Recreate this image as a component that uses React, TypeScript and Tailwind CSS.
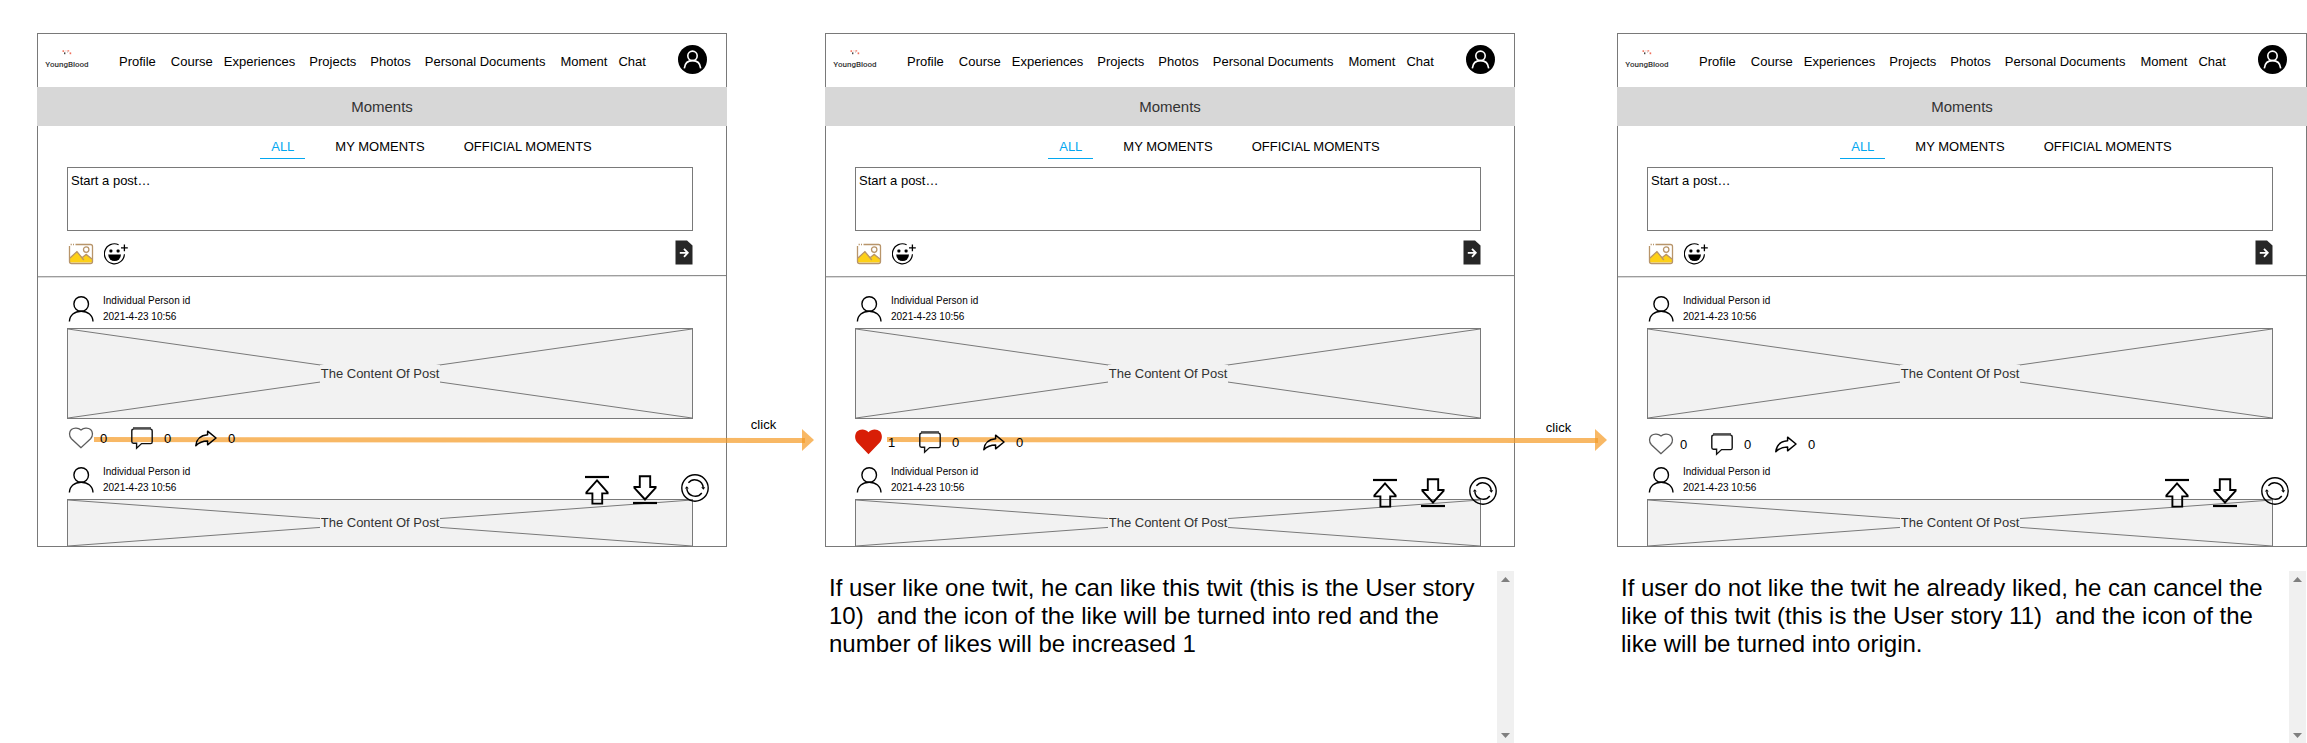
import React from "react";

const NAV = [
  { label: "Profile", space: "" },
  { label: "Course", space: "ml-[15px]" },
  { label: "Experiences", space: "ml-[11px]" },
  { label: "Projects", space: "ml-[14px]" },
  { label: "Photos", space: "ml-[14px]" },
  { label: "Personal Documents", space: "ml-[14px]" },
  { label: "Moment", space: "ml-[15px]" },
  { label: "Chat", space: "ml-[11px]" },
];

function Logo() {
  return (
    <a href="#home" className="flex w-[44px] flex-col items-center">
      <svg width="10" height="5" viewBox="0 0 10 5" aria-hidden="true">
        <rect x="0.5" y="0.3" width="1.6" height="1.6" fill="#f0705c" />
        <rect x="2" y="2.4" width="1.4" height="1.8" fill="#444" />
        <rect x="3.4" y="0.4" width="1" height="1" fill="#f6b3a6" />
        <rect x="5.4" y="0.3" width="1.8" height="1.2" fill="#f0705c" />
        <rect x="5" y="1.6" width="1" height="1" fill="#bbb" />
        <rect x="7.6" y="2.4" width="1.6" height="1.8" fill="#f0705c" />
      </svg>
      <span className="mt-1 font-['Roboto'] text-[8px] leading-[12px] font-medium text-[#333]">YoungBlood</span>
    </a>
  );
}

function AccountIcon() {
  return (
    <svg width="29" height="29" viewBox="0 0 29 29" aria-hidden="true">
      <circle cx="14.5" cy="14.5" r="14.5" />
      <g fill="none" stroke="#fff" strokeWidth="1.6">
        <circle cx="14.5" cy="10.8" r="4.7" />
        <path d="M6.3 23.3C6.8 18.4 10 15.6 14.5 15.6S22.2 18.4 22.7 23.3" />
      </g>
    </svg>
  );
}

function PersonIcon() {
  return (
    <svg width="26" height="26" viewBox="0 0 26 26" fill="none" stroke="#000" strokeWidth="1.4" aria-hidden="true">
      <circle cx="13.2" cy="8" r="7.3" />
      <path d="M1.4 25.6C1.6 19.2 6.6 15.3 13.2 15.3S24.8 19.2 25 25.6" />
    </svg>
  );
}

function PictureIcon() {
  return (
    <svg width="26" height="22" viewBox="0 0 26 22" aria-hidden="true">
      <path d="M2 19.5V14.6L9 8.2L14.3 14.6L18.3 11.3L24 16V19.5Z" fill="#fdd017" />
      <g fill="none" stroke="#b8956a" strokeWidth="1.3">
        <path d="M1.5 3V18.5Q1.5 20.5 3.5 20.5H22.5Q24.5 20.5 24.5 18.5V3.5Q24.5 1.5 22.5 1.5H7.5" />
        <path d="M2.6 1.5H3.8M5 1.5H6" />
        <path d="M2 15L8.9 8.6L15.8 17M13.9 14.8L18.2 11.4L24 16" />
        <circle cx="18.2" cy="6.6" r="2.7" />
      </g>
    </svg>
  );
}

function EmojiIcon() {
  return (
    <svg width="25" height="22" viewBox="0 0 25 22" aria-hidden="true">
      <path d="M14.6 1.7A10 10 0 1 0 20.4 11.3" fill="none" stroke="#000" strokeWidth="1.2" />
      <path d="M20.4 1.4V8.2M17 4.8H23.8" stroke="#000" strokeWidth="1.3" />
      <rect x="5.4" y="6.6" width="3" height="3" rx="1" />
      <rect x="12.6" y="6.6" width="3" height="3" rx="1" />
      <path d="M4.2 11.6H17A6.4 6.4 0 0 1 4.2 11.6Z" />
    </svg>
  );
}

function SendIcon() {
  return (
    <svg width="18" height="25" viewBox="0 0 18 25" aria-hidden="true">
      <path d="M0.5 0.5H12L17.5 5.5V24.5H0.5Z" fill="#272727" />
      <path d="M4.8 12.8H12.4M9 8.8L12.8 12.8L9 16.8" fill="none" stroke="#fff" strokeWidth="1.8" />
    </svg>
  );
}

function HeartIcon({ liked }: { liked: boolean }) {
  return liked ? (
    <svg width="27" height="26" viewBox="0 0 27 26" aria-hidden="true">
      <path
        d="M13.5 25.3L2 13.2C-0.6 10.2 -0.4 5.2 2 2.6C5 -0.4 10.5 -0.3 13.5 3.3C16.5 -0.3 22 -0.4 25 2.6C27.4 5.2 27.6 10.2 25 13.2Z"
        fill="#d81e06"
      />
    </svg>
  ) : (
    <svg width="27" height="22" viewBox="0 0 27 22" aria-hidden="true">
      <path
        d="M14 20.7L4.4 11.7C1.8 9 2 4.6 4.4 2.5C7 0.4 11.2 0.6 14 3C16.8 0.6 21 0.4 23.6 2.5C26 4.6 26.2 9 23.6 11.7Z"
        fill="#fff"
        stroke="#5c5c5c"
        strokeWidth="1.3"
      />
    </svg>
  );
}

function CommentIcon() {
  return (
    <svg width="22" height="23" viewBox="0 0 22 23" fill="none" aria-hidden="true">
      <path d="M2 1.4H20" stroke="#505050" strokeWidth="2.6" />
      <path
        d="M2.4 2.2Q0.8 2.2 0.8 3.8V14.6Q0.8 16.3 2.4 16.3H5.6V21.2L10.6 16.6H19.6Q21.2 16.6 21.2 15V3.8Q21.2 2.2 19.6 2.2"
        stroke="#111"
        strokeWidth="1.4"
      />
    </svg>
  );
}

function ShareIcon() {
  return (
    <svg width="22" height="17" viewBox="0 0 22 17" aria-hidden="true">
      <path
        d="M12.6 1.2L21 8L12.6 14.8V11C8 11 4 12.4 0.8 15.8C1.4 9.8 5.4 5.4 12.6 4.8Z"
        fill="none"
        stroke="#000"
        strokeWidth="1.5"
        strokeLinejoin="round"
      />
    </svg>
  );
}

function ToTopIcon() {
  return (
    <svg width="24" height="30" viewBox="0 0 24 30" fill="none" stroke="#000" strokeWidth="1.9" aria-hidden="true">
      <path d="M0 2H24" strokeWidth="2.2" />
      <path d="M12 5.4L22.6 17.4V18.4H17.2V28.6H7.4V18.4H1.4V17.4Z" />
    </svg>
  );
}

function ToBottomIcon() {
  return (
    <svg width="24" height="30" viewBox="0 0 24 30" fill="none" stroke="#000" strokeWidth="1.9" aria-hidden="true">
      <path d="M0 28H24" strokeWidth="2.2" />
      <path d="M12 24.5L1.4 12.8V12H6.8V1.2H17.2V12H22.6V12.8Z" />
    </svg>
  );
}

function RefreshIcon() {
  return (
    <svg width="28" height="28" viewBox="0 0 28 28" aria-hidden="true">
      <g fill="none" stroke="#000" strokeWidth="1.4">
        <circle cx="14" cy="14" r="13.2" />
        <path d="M7.4 8.8A8.4 8.4 0 0 1 22.2 13.6" />
        <path d="M20.8 19A8.4 8.4 0 0 1 5.8 14.4" />
      </g>
      <path d="M20.2 13.2H24.2L22.4 15.8ZM3.8 14.6H7.8L5.8 12.2Z" />
    </svg>
  );
}

function PostContent({ size }: { size: string }) {
  return (
    <div className={`relative flex items-center justify-center bg-[#f2f2f2] ${size}`}>
      <svg className="absolute inset-0 h-full w-full" stroke="#797979" strokeWidth="1" aria-hidden="true">
        <line x1="0" y1="0" x2="100%" y2="100%" />
        <line x1="0" y1="100%" x2="100%" y2="0" />
      </svg>
      <p className="relative bg-[#f2f2f2] px-px text-[13px] leading-[18px] text-[#333]">The Content Of Post</p>
    </div>
  );
}

function Author() {
  return (
    <div className="flex h-8 items-start gap-[9px] pl-px">
      <PersonIcon />
      <div className="-mt-[3px] text-[10px] leading-4">
        <p>Individual Person id</p>
        <p>2021-4-23 10:56</p>
      </div>
    </div>
  );
}

function Arrow({ place }: { place: string }) {
  return (
    <div className={`pointer-events-none absolute flex items-center ${place}`} aria-hidden="true">
      <svg className="-mr-[3px] h-[22px] min-w-0 flex-1">
        <line x1="0" y1="10.5" x2="100%" y2="11.5" stroke="#f59a23" strokeOpacity="0.7" strokeWidth="5" />
      </svg>
      <svg width="12" height="22" viewBox="0 0 12 22">
        <path d="M0 0L12 11L0 22Z" fill="#f59a23" fillOpacity="0.7" />
      </svg>
    </div>
  );
}

function Action({ label, count, children }: { label: string; count: number; children: React.ReactNode }) {
  return (
    <button type="button" aria-label={label} className="flex h-6 w-16 items-center text-[13px] leading-4">
      <span className="w-[33px] shrink-0">{children}</span>
      <span className="pt-[2px]">{count}</span>
    </button>
  );
}

type ScreenProps = { likes: number; actionsPad: string; toolsPlace: string; arrow?: string };

function Screen({ likes, actionsPad, toolsPlace, arrow }: ScreenProps) {
  return (
    <section className="relative border border-[#797979] bg-white">
      {arrow && <Arrow place={arrow} />}
      <header className="flex h-[53px] items-center pr-[19px] pl-[7px]">
        <Logo />
        <nav className="ml-[30px] flex pt-[3px] text-[13px] leading-4 whitespace-nowrap">
          {NAV.map((n) => (
            <a key={n.label} href={`#${n.label}`} className={n.space}>
              {n.label}
            </a>
          ))}
        </nav>
        <button type="button" aria-label="Account" className="-mt-[2px] ml-auto">
          <AccountIcon />
        </button>
      </header>
      <h1 className="-mx-px bg-[#d7d7d7] text-center text-[15px] leading-[39px] text-[#333]">Moments</h1>
      <div className="flex h-[41px] items-start justify-center pt-3 pl-[88px] text-[13px] leading-[18px] whitespace-nowrap">
        <button type="button" className="border-b border-[#02a7f0] px-[11px] pb-[2px] text-[#02a7f0]">
          ALL
        </button>
        <button type="button" className="ml-[30px]">
          MY MOMENTS
        </button>
        <button type="button" className="ml-[39px]">
          OFFICIAL MOMENTS
        </button>
      </div>
      <form className="pr-[33px] pl-[29px]">
        <textarea
          aria-label="Start a post"
          placeholder="Start a post…"
          className="block h-16 w-full resize-none border border-[#797979] px-[3px] py-[5px] text-[13px] leading-4 placeholder:text-black"
        />
        <div className="flex h-[44px] items-start pt-[9px]">
          <button type="button" aria-label="Add picture" className="mt-[3px] ml-px">
            <PictureIcon />
          </button>
          <button type="button" aria-label="Add emoji" className="mt-[3px] ml-[10px]">
            <EmojiIcon />
          </button>
          <button type="button" aria-label="Send post" className="ml-auto">
            <SendIcon />
          </button>
        </div>
      </form>
      <svg className="block h-[3px] w-full" aria-hidden="true">
        <line x1="0" y1="1.8" x2="100%" y2="0.6" stroke="#797979" strokeWidth="1" />
      </svg>
      <div className="pt-[18px] pr-[33px] pl-[29px]">
        <article>
          <Author />
          <PostContent size="h-[91px] border border-[#797979]" />
          <div className={`relative flex h-12 ${actionsPad}`}>
            <Action label="Like" count={likes}>
              <HeartIcon liked={likes > 0} />
            </Action>
            <Action label="Comment" count={0}>
              <CommentIcon />
            </Action>
            <Action label="Share" count={0}>
              <ShareIcon />
            </Action>
          </div>
        </article>
        <article>
          <Author />
          <PostContent size="h-[47px] border border-b-0 border-[#797979]" />
        </article>
      </div>
      <div className={`absolute right-[17px] flex items-end gap-6 ${toolsPlace}`}>
        <button type="button" aria-label="Go to top">
          <ToTopIcon />
        </button>
        <button type="button" aria-label="Go to bottom">
          <ToBottomIcon />
        </button>
        <button type="button" aria-label="Refresh" className="pb-[3px]">
          <RefreshIcon />
        </button>
      </div>
    </section>
  );
}

function Note({ column, text }: { column: string; text: string }) {
  return (
    <div className={`mt-6 flex min-h-[172px] ${column}`}>
      <p className="flex-1 px-1 py-[3px] text-[24px] leading-[28px] whitespace-pre-wrap">{text}</p>
      <div className="mr-px flex w-[17px] flex-col items-center justify-between bg-[#f0f0f0] pt-[6px] pb-[5px]" aria-hidden="true">
        <svg width="9" height="5" viewBox="0 0 9 5" fill="#7f7f7f">
          <path d="M0 5L4.5 0L9 5Z" />
        </svg>
        <svg width="9" height="5" viewBox="0 0 9 5" fill="#7f7f7f">
          <path d="M0 0L4.5 5L9 0Z" />
        </svg>
      </div>
    </div>
  );
}

export default function App() {
  return (
    <main className="grid min-h-screen grid-cols-[minmax(0,1fr)_98px_minmax(0,1fr)_102px_minmax(0,1fr)] content-start bg-white pt-[33px] pl-[37px] font-['Liberation_Sans',sans-serif] text-black">
      <Screen likes={0} actionsPad="pt-[7px]" toolsPlace="bottom-[41px]" arrow="left-[56px] -right-[88px] top-[395px]" />
      <div className="relative pt-[384px] pr-[25px] text-center text-[13px] leading-4">click</div>
      <Screen likes={1} actionsPad="pt-[11px]" toolsPlace="bottom-[38px]" arrow="left-[61px] -right-[93px] top-[395px]" />
      <div className="relative flex items-start justify-center pt-[387px] pr-[15px] text-[13px] leading-4">
        <span className="bg-white px-1 pb-px">click</span>
      </div>
      <Screen likes={0} actionsPad="pt-[13px]" toolsPlace="bottom-[38px]" />
      <Note
        column="col-start-3"
        text="If user like one twit, he can like this twit (this is the User story 10)  and the icon of the like will be turned into red and the number of likes will be increased 1"
      />
      <Note
        column="col-start-5"
        text="If user do not like the twit he already liked, he can cancel the like of this twit (this is the User story 11)  and the icon of the like will be turned into origin."
      />
    </main>
  );
}
